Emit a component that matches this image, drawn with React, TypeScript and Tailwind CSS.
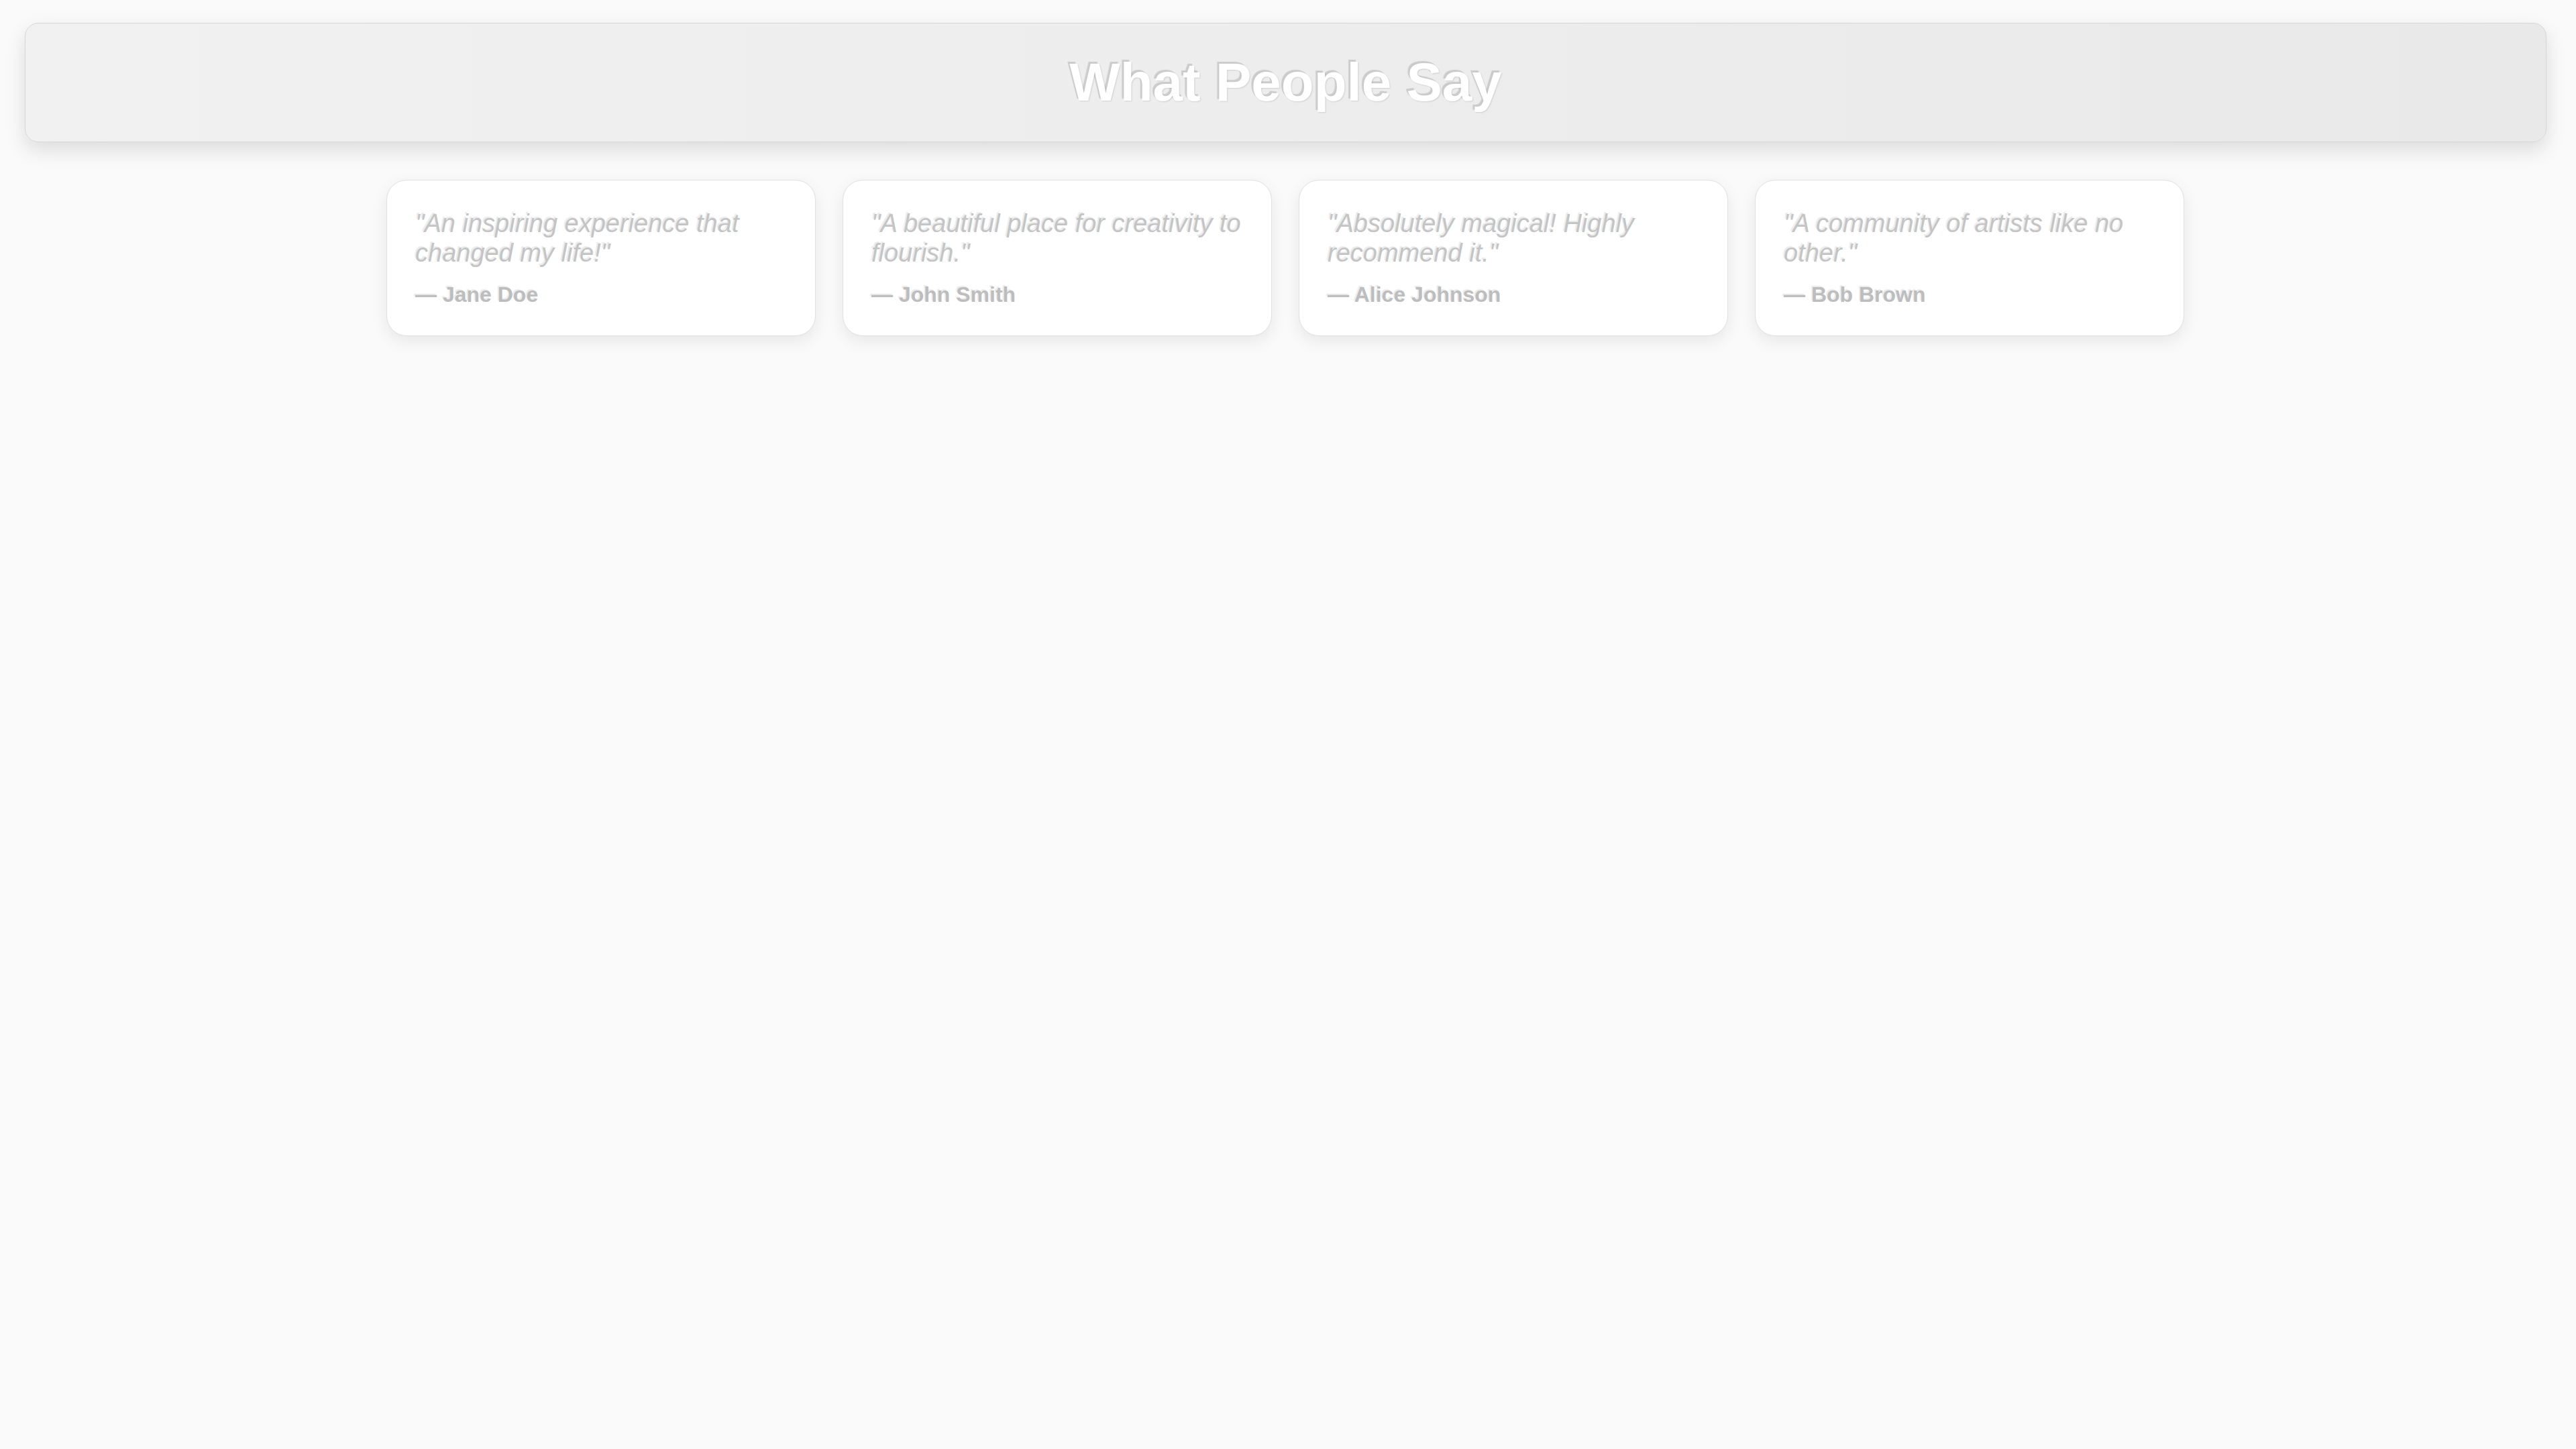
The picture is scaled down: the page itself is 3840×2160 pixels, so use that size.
import React from "react";

const items = [
  { q: '"An inspiring experience that changed my life!"', a: "— Jane Doe" },
  { q: '"A beautiful place for creativity to flourish."', a: "— John Smith" },
  { q: '"Absolutely magical! Highly recommend it."', a: "— Alice Johnson" },
  { q: '"A community of artists like no other."', a: "— Bob Brown" },
];

export default function App() {
  return (
    <div className="min-h-screen w-full bg-[#fafafa] pt-[34px] font-['Liberation_Sans',Arial,sans-serif]">
      <header className="ml-[37px] mr-[44px] rounded-[20px] border border-[#d6d6d6] bg-gradient-to-r from-[#f1f1f1] to-[#e9e9e9] py-[48px] text-center shadow-[0_12px_30px_rgba(0,0,0,0.12)]">
        <h1 className="text-[80px] font-bold leading-[80px] text-white [text-shadow:-3px_-3px_1px_rgba(0,0,0,0.14),1px_1px_2px_rgba(0,0,0,0.12)]">
          What People Say
        </h1>
      </header>
      <div className="mt-[56px] flex justify-center gap-[40px] pr-[8px]">
        {items.map((it) => (
          <div
            key={it.a}
            className="w-[640px] rounded-[30px] border border-[#e0e0e0] bg-white px-[42px] pt-[42px] pb-[42px] shadow-[0_8px_24px_rgba(0,0,0,0.08)]"
          >
            <p className="text-[38px] italic leading-[44px] text-[#c4c4c4] [text-shadow:-2px_-2px_1px_rgba(0,0,0,0.08)]">
              {it.q}
            </p>
            <p className="mt-[22px] text-[32px] font-bold leading-[37px] text-[#bdbdbd] [text-shadow:-2px_-2px_1px_rgba(0,0,0,0.08)]">
              {it.a}
            </p>
          </div>
        ))}
      </div>
    </div>
  );
}
